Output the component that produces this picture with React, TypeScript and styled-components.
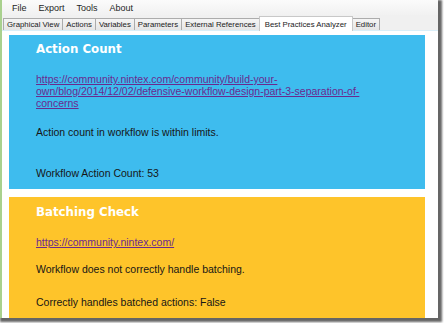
import React from "react";
import styled, { createGlobalStyle } from "styled-components";

const GlobalStyle = createGlobalStyle`
  html, body { margin: 0; padding: 0; background: #ffffff; }
  body { width: 444px; height: 323px; overflow: hidden; }
`;

const Stage = styled.div`
  width: 444px;
  height: 323px;
  background: #ffffff;
  box-sizing: border-box;
  padding: 0 6px 5px 0;
`;

const Window = styled.div`
  width: 438px;
  height: 318px;
  box-sizing: border-box;
  display: flex;
  flex-direction: column;
  overflow: hidden;
  border-left: 2px solid #a9d18e;
  background: #ffffff;
  box-shadow: 2px 2px 2px 2px rgba(50, 50, 50, 0.75);
  font-family: "Liberation Sans", Arial, sans-serif;
`;

const MenuBar = styled.div`
  height: 15px;
  display: flex;
  align-items: center;
  padding-left: 4px;
  background: linear-gradient(#fbfbfb, #f1f1f1);
  font-size: 9px;
  color: #1e1e1e;
`;

const MenuItem = styled.span`
  padding: 0 6px;
`;

const TabStrip = styled.div`
  height: 15px;
  display: flex;
  align-items: flex-end;
  padding-left: 1px;
  background: #f0f0f0;
  border-bottom: 1px solid #d9eef8;
`;

const Tab = styled.div<{ $active?: boolean }>`
  height: ${(p) => (p.$active ? "15px" : "12px")};
  box-sizing: border-box;
  display: flex;
  align-items: center;
  padding: 0 ${(p) => (p.$active ? "5px" : "3px")};
  margin-right: -1px;
  border: 1px solid ${(p) => (p.$active ? "#c8c8c8" : "#acacac")};
  border-bottom: none;
  background: ${(p) => (p.$active ? "#ffffff" : "linear-gradient(#f5f5f5, #e5e5e5)")};
  font-size: 7.8px;
  color: #1a1a1a;
  white-space: nowrap;
  position: relative;
  z-index: ${(p) => (p.$active ? 1 : 0)};
  margin-bottom: ${(p) => (p.$active ? "-1px" : "0")};
`;

const Content = styled.div`
  flex: 1;
  display: flex;
  flex-direction: column;
  gap: 8px;
  padding: 4px 13px 0 7px;
  background: #ffffff;
`;

const Card = styled.section<{ $bg: string; $top: number; $bottom: number }>`
  background: ${(p) => p.$bg};
  padding: ${(p) => p.$top}px 24px ${(p) => p.$bottom}px 27px;
  flex-shrink: 0;
`;

const Title = styled.h2`
  margin: 0;
  font-family: "DejaVu Sans", Verdana, sans-serif;
  font-weight: bold;
  font-size: 11.8px;
  line-height: 16px;
  color: #ffffff;
`;

const Link = styled.a`
  display: block;
  margin-top: 16px;
  font-size: 10.5px;
  line-height: 12px;
  color: #6a2a8e;
  text-decoration: underline;
`;

const Para = styled.p<{ $gap: number }>`
  margin: ${(p) => p.$gap}px 0 0;
  font-size: 10.5px;
  line-height: 12px;
  color: #161616;
`;

const tabs = [
  "Graphical View",
  "Actions",
  "Variables",
  "Parameters",
  "External References",
  "Best Practices Analyzer",
  "Editor",
];

export default function App() {
  return (
    <>
      <GlobalStyle />
      <Stage>
        <Window>
          <MenuBar>
            <MenuItem>File</MenuItem>
            <MenuItem>Export</MenuItem>
            <MenuItem>Tools</MenuItem>
            <MenuItem>About</MenuItem>
          </MenuBar>
          <TabStrip>
            {tabs.map((t) => (
              <Tab key={t} $active={t === "Best Practices Analyzer"}>
                {t}
              </Tab>
            ))}
          </TabStrip>
          <Content>
            <Card $bg="#3ebcee" $top={6} $bottom={10}>
              <Title>Action Count</Title>
              <Link href="#">
                https://community.nintex.com/community/build-your-own/blog/2014/12/02/defensive-workflow-design-part-3-separation-of-concerns
              </Link>
              <Para $gap={17}>Action count in workflow is within limits.</Para>
              <Para $gap={29}>Workflow Action Count: 53</Para>
            </Card>
            <Card $bg="#fec42a" $top={7} $bottom={10}>
              <Title>Batching Check</Title>
              <Link href="#">https://community.nintex.com/</Link>
              <Para $gap={15}>Workflow does not correctly handle batching.</Para>
              <Para $gap={21}>Correctly handles batched actions: False</Para>
            </Card>
          </Content>
        </Window>
      </Stage>
    </>
  );
}
